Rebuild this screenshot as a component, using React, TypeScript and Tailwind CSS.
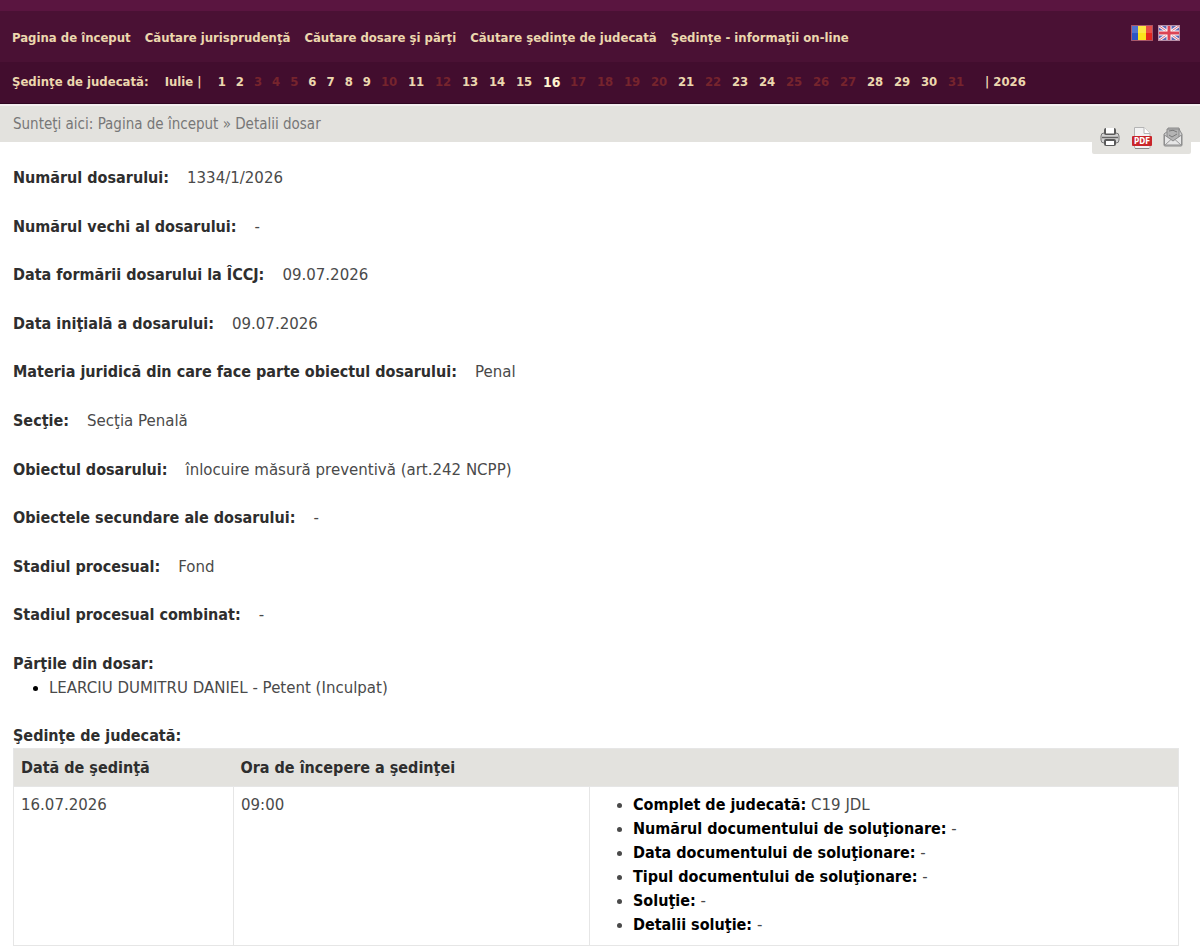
const navLinks = [
    "Pagina de început",
    "Căutare jurisprudenţă",
    "Căutare dosare şi părţi",
    "Căutare şedinţe de judecată",
    "Şedinţe - informaţii on-line",
];

const sessionDays = [1, 2, 6, 7, 8, 9, 11, 13, 14, 15, 16, 21, 23, 24, 28, 29, 30];
const currentDay = 16;

const details = [
    { name: "Numărul dosarului:", value: "1334/1/2026" },
    { name: "Numărul vechi al dosarului:", value: "-" },
    { name: "Data formării dosarului la ÎCCJ:", value: "09.07.2026" },
    { name: "Data iniţială a dosarului:", value: "09.07.2026" },
    { name: "Materia juridică din care face parte obiectul dosarului:", value: "Penal" },
    { name: "Secţie:", value: "Secţia Penală" },
    { name: "Obiectul dosarului:", value: "înlocuire măsură preventivă (art.242 NCPP)" },
    { name: "Obiectele secundare ale dosarului:", value: "-" },
    { name: "Stadiul procesual:", value: "Fond" },
    { name: "Stadiul procesual combinat:", value: "-" },
];

const sessionDetails = [
    { name: "Complet de judecată:", value: "C19 JDL" },
    { name: "Numărul documentului de soluţionare:", value: "-" },
    { name: "Data documentului de soluţionare:", value: "-" },
    { name: "Tipul documentului de soluţionare:", value: "-" },
    { name: "Soluţie:", value: "-" },
    { name: "Detalii soluţie:", value: "-" },
];

const labelClass = "font-['DejaVu_Sans_Condensed',Tahoma,sans-serif] text-[16px] leading-6 font-bold text-[#2e2e2e]";

export default function App() {
    return (
        <div className="w-full bg-white text-[15px] leading-6 text-[#4a4a4a] font-['DejaVu_Sans',Verdana,sans-serif]">
            <Header />
            <Breadcrumb />
            <main className="pl-[13px] pr-[21px] pt-6">
                <dl className="h-[486px] grid auto-rows-fr">
                    {details.map((item) => (
                        <div key={item.name} className="flex gap-[18px]">
                            <dt className={labelClass}>{item.name}</dt>
                            <dd>{item.value}</dd>
                        </div>
                    ))}
                </dl>
                <h2 className={labelClass}>Părţile din dosar:</h2>
                <ul className="list-disc pl-9 marker:text-black">
                    <li>LEARCIU DUMITRU DANIEL - Petent (Inculpat)</li>
                </ul>
                <h2 className={`mt-6 ${labelClass}`}>Şedinţe de judecată:</h2>
                <SessionsTable />
            </main>
        </div>
    )
}

const Header = () => {
    return (
        <header className="font-['DejaVu_Sans_Condensed',Tahoma,sans-serif] font-bold text-[13px] leading-5 text-[#ecd7ae]">
            <div className="h-[11px] bg-[#5a1540]" />
            <div className="h-[51px] px-3 flex justify-between bg-[#4a1134]">
                <nav className="flex items-center gap-[14px] pt-0.5">
                    {navLinks.map((link) => (
                        <a key={link} href="#">{link}</a>
                    ))}
                </nav>
                <div className="flex gap-[5px] pt-[14px] pr-2">
                    <a href="#" aria-label="Română" className="h-4"><RomanianFlag /></a>
                    <a href="#" aria-label="English" className="h-4"><BritishFlag /></a>
                </div>
            </div>
            <div className="h-[42px] px-3 pb-0.5 flex items-center border-b border-[#2e0620] bg-[#420d2e]">
                <span>Şedinţe de judecată:</span>
                <span className="ml-4">Iulie |</span>
                <div className="ml-4 flex gap-[10px]">
                    {Array.from({ length: 31 }, (_, i) => i + 1).map((day) => (
                        <Day key={day} day={day} />
                    ))}
                </div>
                <span className="ml-5">| 2026</span>
            </div>
        </header>
    )
}

const Day = ({ day }: Readonly<{ day: number }>) => {
    const width = day > 9 ? "w-[17px]" : "";

    if (!sessionDays.includes(day)) {
        return <span className={`${width} text-[#76242d]`}>{day}</span>
    }

    return <a href="#" className={`${width} ${day === currentDay ? "text-[14px] text-[#fff3cf]" : ""}`}>{day}</a>
}

const Breadcrumb = () => {
    return (
        <div className="relative h-[38px] px-[13px] flex items-center border-t-2 border-[#f3eeef] bg-[#e3e2de] font-['DejaVu_Sans_Condensed',Tahoma,sans-serif] text-[#777777]">
            <p>Sunteţi aici: <a href="#">Pagina de început</a> » Detalii dosar</p>
            <div className="absolute right-[9px] top-4 h-8 w-[99px] flex justify-between px-2 pt-[5px] rounded-b-xs bg-[#e3e2de]">
                <button type="button" aria-label="Tipărire" className="size-5"><PrinterIcon /></button>
                <button type="button" aria-label="PDF" className="size-5"><PdfIcon /></button>
                <button type="button" aria-label="E-mail" className="size-5"><MailIcon /></button>
            </div>
        </div>
    )
}

const SessionsTable = () => {
    return (
        <table className="w-full table-fixed border-collapse border border-[#e6e6e6]">
            <colgroup>
                <col className="w-[220px]" />
                <col className="w-[356px]" />
                <col />
            </colgroup>
            <thead>
                <tr className="h-[38px] bg-[#e3e2de] text-left">
                    <th className={`px-[7px] ${labelClass}`}>Dată de şedinţă</th>
                    <th className={`px-[7px] ${labelClass}`}>Ora de începere a şedinţei</th>
                    <th aria-label="Detalii" />
                </tr>
            </thead>
            <tbody>
                <tr className="align-top">
                    <td className="border border-[#e6e6e6] px-[7px] py-[6px]">16.07.2026</td>
                    <td className="border border-[#e6e6e6] px-[7px] py-[6px]">09:00</td>
                    <td className="border border-[#e6e6e6] px-[7px] pt-[6px] pb-2">
                        <ul className="list-disc pl-9">
                            {sessionDetails.map((item) => (
                                <li key={item.name}>
                                    <b className="font-['DejaVu_Sans_Condensed',Tahoma,sans-serif] text-[16px] text-black">{item.name}</b> {item.value}
                                </li>
                            ))}
                        </ul>
                    </td>
                </tr>
            </tbody>
        </table>
    )
}

const RomanianFlag = () => (
    <svg width="22" height="16" viewBox="0 0 22 16">
        <path d="M0 0h8v16H0z" fill="#2a55c4" />
        <path d="M7 0h8v16H7z" fill="#fbe31c" />
        <path d="M15 0h7v16h-7z" fill="#e3261f" />
        <path d="M1 1h20v7H1z" fill="#fff" opacity=".18" />
        <path d="M.5.5h21v15H.5z" fill="none" stroke="#a8586a" />
    </svg>
)

const BritishFlag = () => (
    <svg width="22" height="16" viewBox="0 0 22 16">
        <path d="M0 0h22v16H0z" fill="#5b67b4" />
        <path d="M0 0l22 16M22 0L0 16" stroke="#f4eef4" strokeWidth="3" />
        <path d="M0 0l22 16M22 0L0 16" stroke="#de6a78" strokeWidth="1" />
        <path d="M11 0v16M0 8h22" stroke="#fff" strokeWidth="5" />
        <path d="M11 0v16M0 8h22" stroke="#dc4455" strokeWidth="3" />
        <path d="M.5.5h21v15H.5z" fill="none" stroke="#b690a8" />
    </svg>
)

const PrinterIcon = () => (
    <svg width="20" height="20" viewBox="0 0 20 20">
        <rect x="1" y="6" width="18" height="10" rx="3" fill="#d2d2d2" stroke="#777" />
        <path d="M2 10.5h16" stroke="#666" strokeWidth="1.5" />
        <rect x="4" y="1" width="12" height="7" rx="2" fill="#5a5a5a" />
        <path d="M6 1h8v5.5H6z" fill="#fff" />
        <rect x="4" y="12" width="12" height="7" rx="2" fill="#5a5a5a" />
        <path d="M6 14h8v4H6z" fill="#fff" />
    </svg>
)

const PdfIcon = () => (
    <svg width="20" height="23" viewBox="0 0 20 23">
        <path d="M2.5.5H12l6 6v14q0 1-1 1H4q-1.5 0-1.5-1.5z" fill="#f3f3f3" stroke="#b4b4b4" />
        <path d="M12 .5v6h6" fill="#fff" stroke="#b4b4b4" />
        <path d="M3 21.5h14" stroke="#888" />
        <rect x="0" y="9" width="20" height="10" rx="1" fill="#c9262b" />
        <text x="10" y="17" textAnchor="middle" fontSize="8" fontWeight="bold" fill="#fff">PDF</text>
    </svg>
)

const MailIcon = () => (
    <svg width="20" height="20" viewBox="0 0 20 20">
        <path d="M1 7l4-3V1h11l1 3 2 3v11q0 1-1 1H2q-1 0-1-1z" fill="#cfcfcf" stroke="#8a8a8a" />
        <path d="M4 2h12v8l-6 4-6-4z" fill="#b4b4b4" stroke="#8a8a8a" />
        <path d="M6 4q4-2 8 1M6 8l3 2 5-3" fill="none" stroke="#7a7a7a" />
        <path d="M1.5 8L10 14l8.500-6v10h-17z" fill="#e6e6e6" stroke="#8f8f8f" />
        <path d="M2 18l6-5.500M18 18l-6-5.500" stroke="#9a9a9a" />
    </svg>
)
